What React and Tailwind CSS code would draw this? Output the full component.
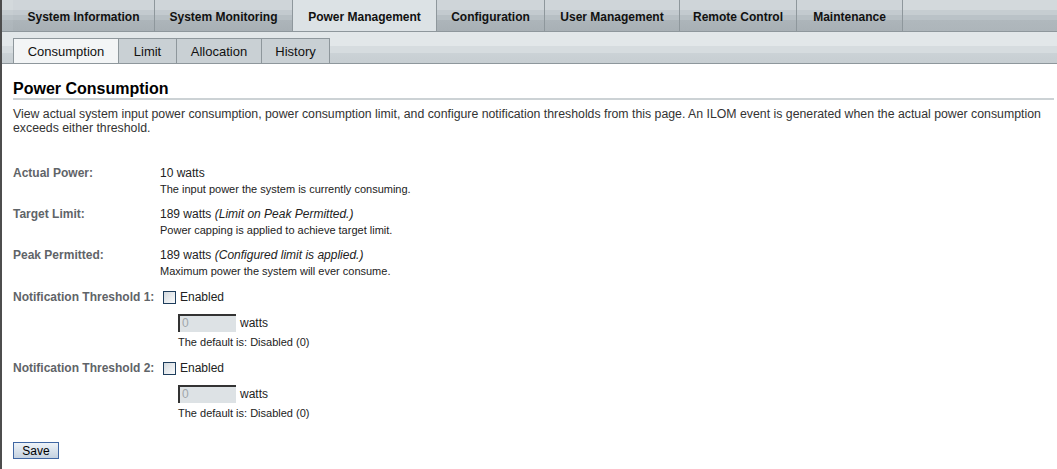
import React from 'react'

const mainTabs = [
  { label: 'System Information', w: 142 },
  { label: 'System Monitoring', w: 138 },
  { label: 'Power Management', w: 144, active: true },
  { label: 'Configuration', w: 108 },
  { label: 'User Management', w: 135 },
  { label: 'Remote Control', w: 117 },
  { label: 'Maintenance', w: 106 },
]

const subTabs = [
  { label: 'Consumption', w: 106, active: true },
  { label: 'Limit', w: 58 },
  { label: 'Allocation', w: 85 },
  { label: 'History', w: 68 },
]

const font = { fontFamily: '"Liberation Sans", Arial, sans-serif' }

function FieldRow({ label, value, note, desc }) {
  return (
    <div className="flex mb-[9px]">
      <div className="w-[147px] shrink-0 h-4 leading-4 text-[12px] font-bold text-[#5f6468]">{label}</div>
      <div>
        <div className="h-4 leading-4 text-[12px] text-[#222]">
          {value} {note && <i>{note}</i>}
        </div>
        <div className="h-4 leading-4 text-[11px] text-[#222]">{desc}</div>
      </div>
    </div>
  )
}

function Checkbox() {
  return (
    <span className="inline-block w-[13px] h-[13px] border border-[#1e3d5c] bg-gradient-to-br from-[#d3d9de] to-[#fafbfc] mr-[4px]" />
  )
}

function Threshold({ n }) {
  return (
    <div className="flex mb-[11px]">
      <div className="w-[147px] shrink-0 h-4 leading-4 text-[12px] font-bold text-[#5f6468]">
        Notification Threshold {n}:
      </div>
      <div className="pl-[3px]">
        <div className="flex items-center h-4 text-[12px] text-[#222]">
          <Checkbox />
          Enabled
        </div>
        <div className="pl-[15px] mt-[9px]">
          <div className="flex items-center h-[18px]">
            <div className="w-[58px] h-[18px] bg-[#dde2e5] border-t-2 border-l-2 border-t-[#333] border-l-[#333] pl-[2px] text-[12px] leading-[15px] text-[#a0a6aa]">
              0
            </div>
            <span className="ml-[4px] text-[12px] text-[#222]">watts</span>
          </div>
          <div className="mt-[3px] h-[14px] leading-[14px] text-[11px] text-[#222]">The default is: Disabled (0)</div>
        </div>
      </div>
    </div>
  )
}

export default function App() {
  return (
    <div className="w-[1057px] h-[469px] bg-white border-l-2 border-[#4d4d4d] overflow-hidden" style={font}>
      {/* main tabs */}
      <div className="h-[32px] flex pl-[11px] border-b border-[#8e979c] bg-[linear-gradient(to_bottom,#d3d9dc_0px,#d3d9dc_10px,#c6cdd1_10px,#c6cdd1_15px,#bac2c7_15px,#bac2c7_20px,#b0b8bd_20px,#adb5ba_31px)]">
        {mainTabs.map((t) => (
          <div
            key={t.label}
            style={{ width: t.w }}
            className={
              'h-[31px] pt-[2px] flex items-center justify-center text-[12px] font-bold text-[#111] border-r border-[#8e979c] ' +
              (t.active
                ? 'bg-[#dce2e5]'
                : 'bg-[linear-gradient(to_bottom,#cfd5d9_0px,#cfd5d9_10px,#c3cacf_10px,#c3cacf_15px,#b7bfc4_15px,#b7bfc4_20px,#adb5ba_20px,#a8b0b5_31px)]')
            }
          >
            {t.label}
          </div>
        ))}
      </div>

      {/* sub tabs */}
      <div className="h-[32px] flex items-end pl-[11px] border-b border-[#8e979c] bg-[linear-gradient(to_bottom,#e2e7e9_0px,#e2e7e9_14px,#d6dcdf_14px,#d6dcdf_21px,#cbd2d6_21px,#c7ced2_31px)]">
        {subTabs.map((t) => (
          <div
            key={t.label}
            style={{ width: t.w }}
            className={
              'h-[25px] pt-[2px] flex items-center justify-center text-[13px] text-[#111] border-t border-r border-[#8e979c] ' +
              (t.active ? 'bg-[#f3f5f6] border-l' : 'bg-[#c9d0d4]')
            }
          >
            {t.label}
          </div>
        ))}
      </div>

      {/* content */}
      <div className="pl-[11px] pr-[3px]">
        <h1 className="mt-[16px] text-[16px] leading-[18px] font-bold text-[#000]">Power Consumption</h1>
        <div className="h-[2px] bg-[#ccd2d5]" />
        <p className="mt-[7px] text-[12.3px] leading-[14px] text-[#333]">
          View actual system input power consumption, power consumption limit, and configure notification thresholds from
          this page. An ILOM event is generated when the actual power consumption exceeds either threshold.
        </p>

        <div className="mt-[30px]">
          <FieldRow label="Actual Power:" value="10 watts" desc="The input power the system is currently consuming." />
          <FieldRow
            label="Target Limit:"
            value="189 watts"
            note="(Limit on Peak Permitted.)"
            desc="Power capping is applied to achieve target limit."
          />
          <FieldRow
            label="Peak Permitted:"
            value="189 watts"
            note="(Configured limit is applied.)"
            desc="Maximum power the system will ever consume."
          />
          <div className="h-[1px]" />
          <Threshold n={1} />
          <Threshold n={2} />
        </div>

        <button className="mt-[11px] w-[46px] h-[17px] border border-[#3f66a3] bg-gradient-to-b from-[#eef3f8] to-[#c4d1e0] text-[12px] leading-[14px] text-[#000]">
          Save
        </button>
      </div>
    </div>
  )
}
